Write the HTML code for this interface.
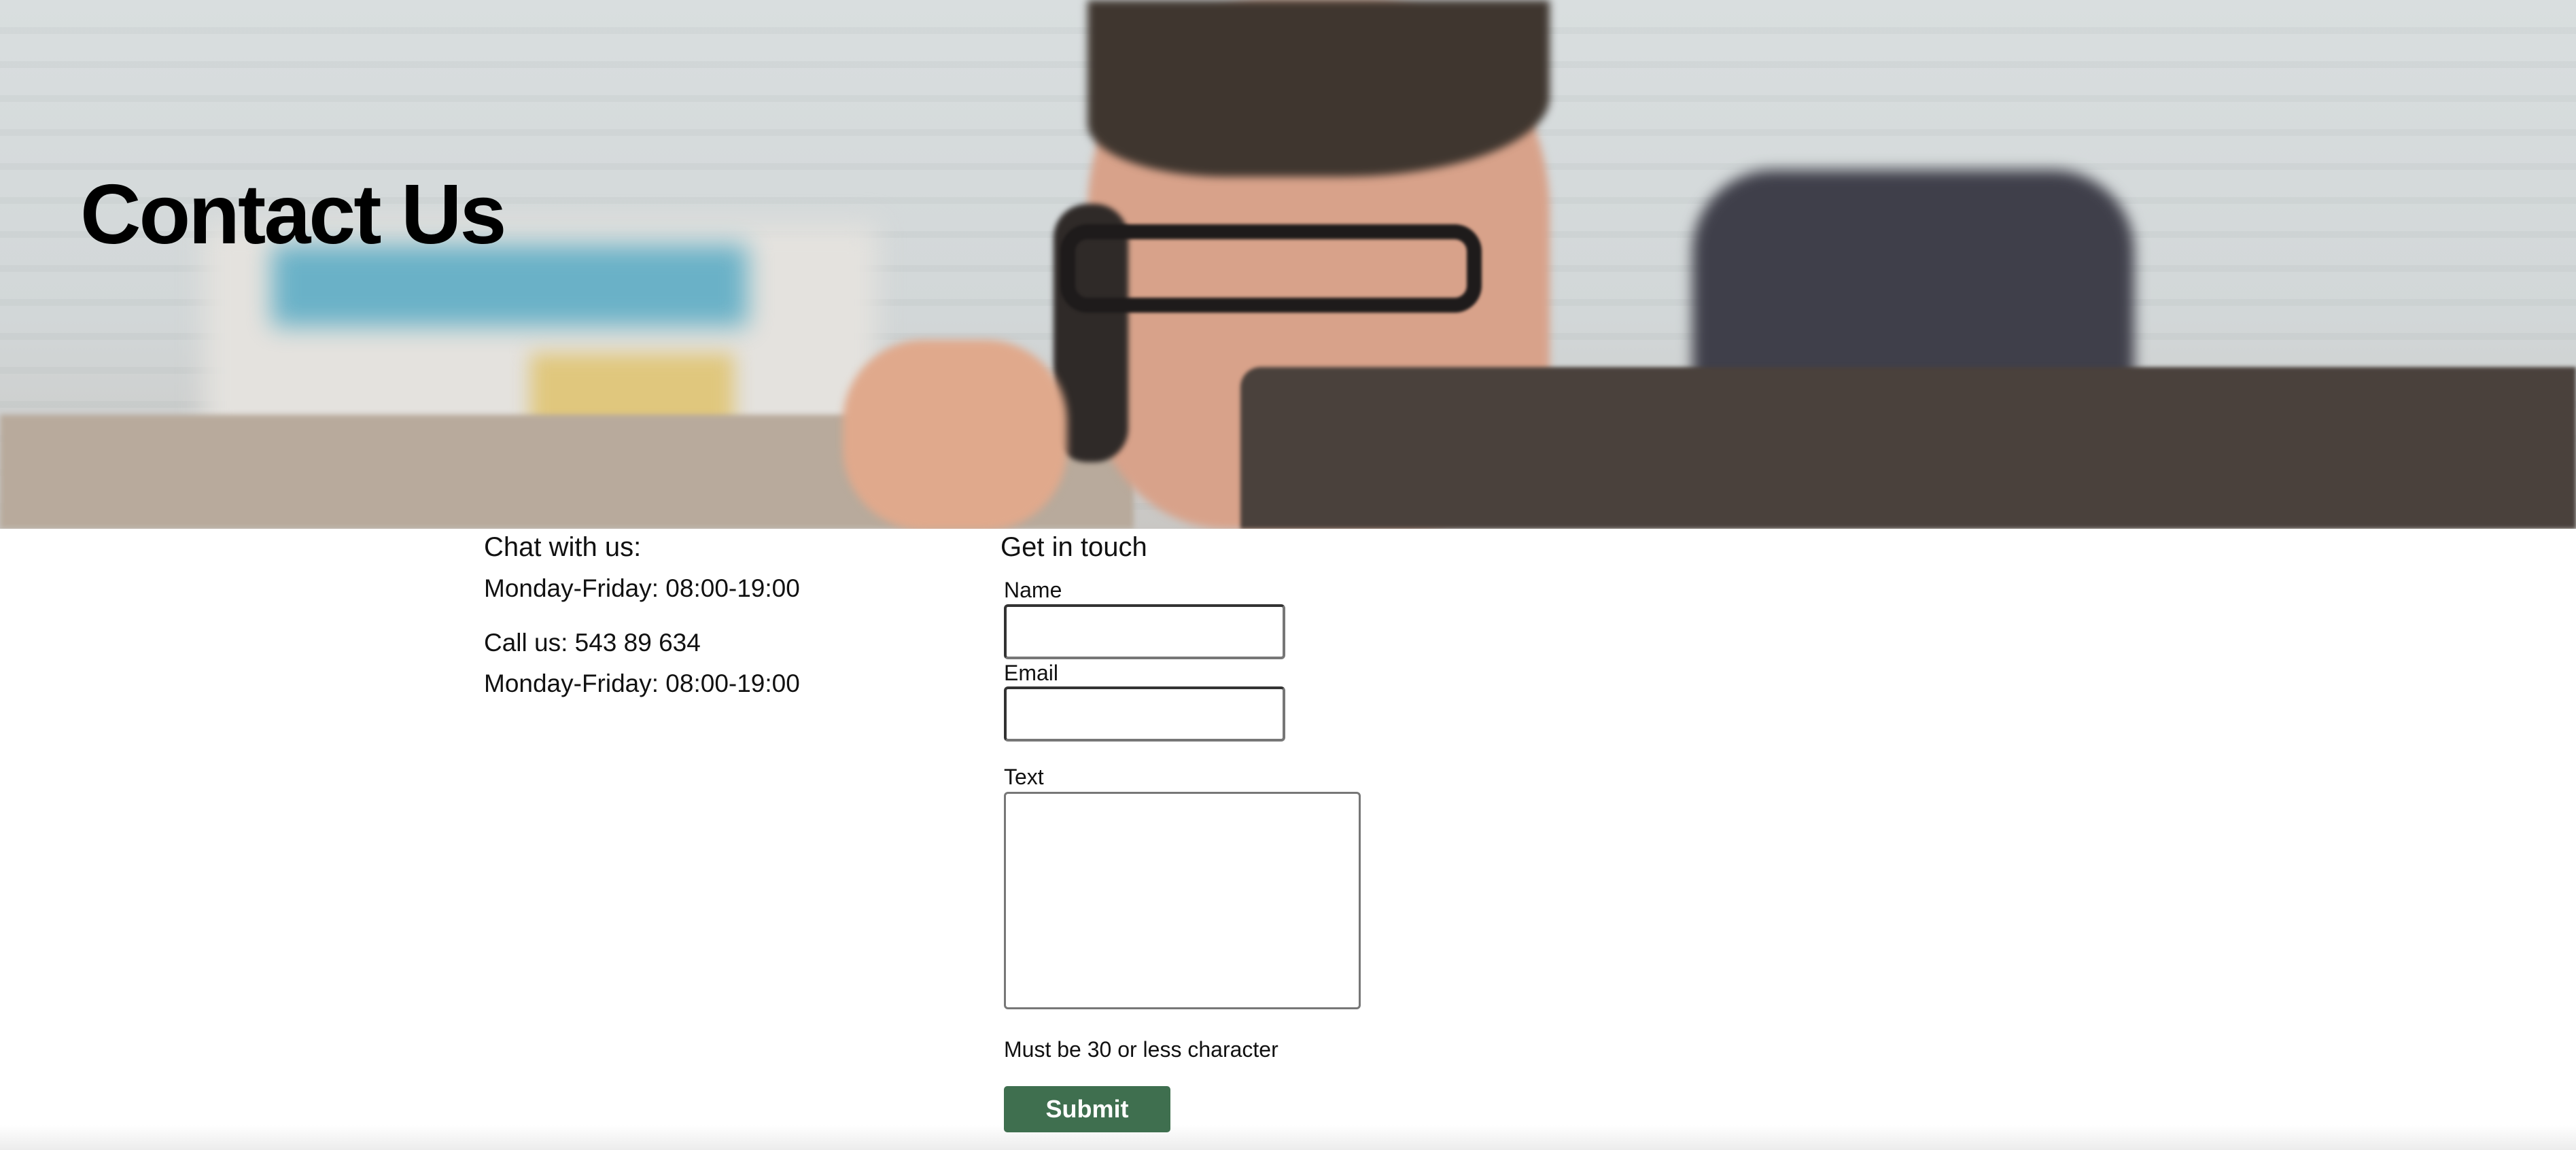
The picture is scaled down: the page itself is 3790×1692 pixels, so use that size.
<!DOCTYPE html>
<html><head><meta charset="utf-8"><style>
*{margin:0;padding:0;box-sizing:border-box}
body{width:3790px;height:1692px;background:#fff;font-family:"Liberation Sans",sans-serif;position:relative;overflow:hidden}
.hero{position:absolute;left:0;top:0;width:3790px;height:778px;overflow:hidden;background:linear-gradient(180deg,#d9dedf 0%,#d2d7d8 60%,#c9c7c4 100%)}
.blinds{position:absolute;inset:0;background:repeating-linear-gradient(180deg,rgba(255,255,255,0) 0 40px,rgba(150,160,160,.1) 40px 50px)}
.r{position:absolute}
h1{position:absolute;left:118px;top:245px;font-size:124px;font-weight:bold;color:#000;letter-spacing:-3px}
.t{position:absolute;color:#111;font-weight:300}
.inp{position:absolute;border:4px solid #333;border-radius:6px;border-bottom-color:#777;border-right-color:#777;background:#fff}
</style></head><body>
<div class="r" style="left:0;top:1655px;width:3790px;height:37px;background:linear-gradient(180deg,#fff,#ececec)"></div>
<div class="hero">
<div class="blinds"></div>
<div class="r" style="left:300px;top:330px;width:990px;height:320px;background:#e4e2de;filter:blur(20px)"></div>
<div class="r" style="left:400px;top:360px;width:700px;height:120px;background:#55a9c4;filter:blur(18px);opacity:.85"></div>
<div class="r" style="left:780px;top:520px;width:300px;height:130px;background:#e0c77d;filter:blur(14px)"></div>
<div class="r" style="left:0;top:610px;width:1668px;height:168px;background:#b8aa9c;border-top-right-radius:60px;filter:blur(4px)"></div>
<div class="r" style="left:2490px;top:250px;width:650px;height:320px;background:#3f3f4a;border-radius:120px 120px 20px 20px;filter:blur(10px)"></div>
<div class="r" style="left:1600px;top:0;width:680px;height:778px;background:#d8a28a;border-radius:40% 40% 30% 30%;filter:blur(6px)"></div>
<div class="r" style="left:1600px;top:0;width:680px;height:260px;background:#3f362f;border-radius:0 0 45% 30%;filter:blur(6px)"></div>
<div class="r" style="left:1550px;top:300px;width:110px;height:380px;background:#2f2a28;border-radius:50px;filter:blur(4px)"></div>
<div class="r" style="left:1240px;top:500px;width:330px;height:280px;background:#e0a98c;border-radius:120px;filter:blur(6px)"></div>
<div class="r" style="left:1560px;top:330px;width:620px;height:130px;border:22px solid #1e1b1b;border-radius:40px;filter:blur(2px)"></div>
<div class="r" style="left:1825px;top:540px;width:1965px;height:238px;background:#4a413c;border-radius:30px 0 0 0;filter:blur(3px)"></div>
<h1>Contact Us</h1>
</div>
<div class="t" style="left:712px;top:783px;font-size:40px">Chat with us:</div>
<div class="t" style="left:712px;top:845px;font-size:37px">Monday-Friday: 08:00-19:00</div>
<div class="t" style="left:712px;top:925px;font-size:37px">Call us: 543 89 634</div>
<div class="t" style="left:712px;top:985px;font-size:37px">Monday-Friday: 08:00-19:00</div>
<div class="t" style="left:1472px;top:783px;font-size:40px">Get in touch</div>
<div class="t" style="left:1477px;top:850px;font-size:32px">Name</div>
<div class="inp" style="left:1477px;top:889px;width:414px;height:81px"></div>
<div class="t" style="left:1477px;top:972px;font-size:32px">Email</div>
<div class="inp" style="left:1477px;top:1010px;width:414px;height:81px"></div>
<div class="t" style="left:1477px;top:1125px;font-size:32px">Text</div>
<div class="r" style="left:1477px;top:1165px;width:525px;height:320px;border:3px solid #777;border-radius:6px"></div>
<div class="t" style="left:1477px;top:1526px;font-size:32px">Must be 30 or less character</div>
<div class="r" style="left:1477px;top:1598px;width:245px;height:68px;background:#3f6f4f;border-radius:5px;color:#fff;font-weight:bold;font-size:36px;text-align:center;line-height:68px">Submit</div>
</body></html>
